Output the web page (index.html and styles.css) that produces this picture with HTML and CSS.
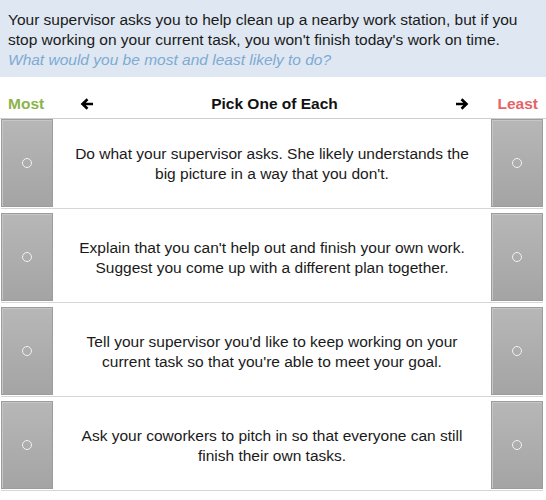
FILE: index.html
```html
<!DOCTYPE html>
<html>
<head>
<meta charset="utf-8">
<link rel="stylesheet" href="styles.css">
</head>
<body>
<div class="prompt">
  <p class="scenario">Your supervisor asks you to help clean up a nearby work station, but if you stop working on your current task, you won't finish today's work on time.</p>
  <p class="question">What would you be most and least likely to do?</p>
</div>
<div class="bar">
  <span class="most">Most</span>
  <svg class="arrow" width="14" height="14" viewBox="0 0 14 14"><path d="M13 7H3M7.5 2.2L2.5 7l5 4.8" fill="none" stroke="#000" stroke-width="2.6" stroke-linecap="butt" stroke-linejoin="miter"/></svg>
  <span class="title">Pick One of Each</span>
  <svg class="arrow" width="14" height="14" viewBox="0 0 14 14"><path d="M1 7h10M6.5 2.2L11.5 7l-5 4.8" fill="none" stroke="#000" stroke-width="2.6" stroke-linecap="butt" stroke-linejoin="miter"/></svg>
  <span class="least">Least</span>
</div>
<div class="options">
  <div class="option">
    <div class="pick"><span class="dot"></span></div>
    <div class="text">Do what your supervisor asks. She likely understands the big picture in a way that you don't.</div>
    <div class="pick"><span class="dot"></span></div>
  </div>
  <div class="option">
    <div class="pick"><span class="dot"></span></div>
    <div class="text">Explain that you can't help out and finish your own work. Suggest you come up with a different plan together.</div>
    <div class="pick"><span class="dot"></span></div>
  </div>
  <div class="option">
    <div class="pick"><span class="dot"></span></div>
    <div class="text">Tell your supervisor you'd like to keep working on your current task so that you're able to meet your goal.</div>
    <div class="pick"><span class="dot"></span></div>
  </div>
  <div class="option">
    <div class="pick"><span class="dot"></span></div>
    <div class="text">Ask your coworkers to pitch in so that everyone can still finish their own tasks.</div>
    <div class="pick"><span class="dot"></span></div>
  </div>
</div>
</body>
</html>
```
FILE: styles.css
```css
html, body {
  margin: 0;
  padding: 0;
  background: #fff;
}
body {
  font-family: "Liberation Sans", Arial, sans-serif;
  font-size: 15.5px;
  color: #111;
  width: 546px;
}
.prompt {
  background: #dfe8f2;
  padding: 10px 8px 9px 8px;
  height: 58px;
}
.prompt p {
  margin: 0;
  line-height: 20px;
}
.scenario {
  color: #1a1a1a;
}
.question {
  font-style: italic;
  color: #7eaad3;
}
.bar {
  display: flex;
  align-items: center;
  height: 28px;
  padding: 13px 8px 0 8px;
  border-bottom: 1px solid #cfcfcf;
  font-weight: bold;
}
.most {
  color: #8db34c;
  width: 72px;
  flex: none;
}
.least {
  color: #e46469;
  width: 69px;
  flex: none;
  text-align: right;
}
.title {
  flex: 1;
  text-align: center;
  color: #111;
}
.arrow {
  display: block;
  flex: none;
}
.options {
  display: flex;
  flex-direction: column;
  gap: 4px;
  padding: 0 3px 0 1px;
}
.option {
  display: grid;
  grid-template-columns: 52px 1fr 52px;
  height: 89px;
  border-bottom: 1px solid #d6d6d6;
}
.pick {
  background: linear-gradient(#b7b7b7, #a4a4a4);
  border: 1px solid #9c9c9c;
  box-shadow: inset 1px 1px 0 #c6c6c6;
  display: flex;
  align-items: center;
  justify-content: center;
  margin-bottom: 1px;
}
.dot {
  width: 8px;
  height: 8px;
  border: 1px solid #f2f2f2;
  border-radius: 50%;
}
.text {
  display: flex;
  align-items: center;
  justify-content: center;
  text-align: center;
  line-height: 20px;
  padding: 0 12px;
  color: #1a1a1a;
}
```
